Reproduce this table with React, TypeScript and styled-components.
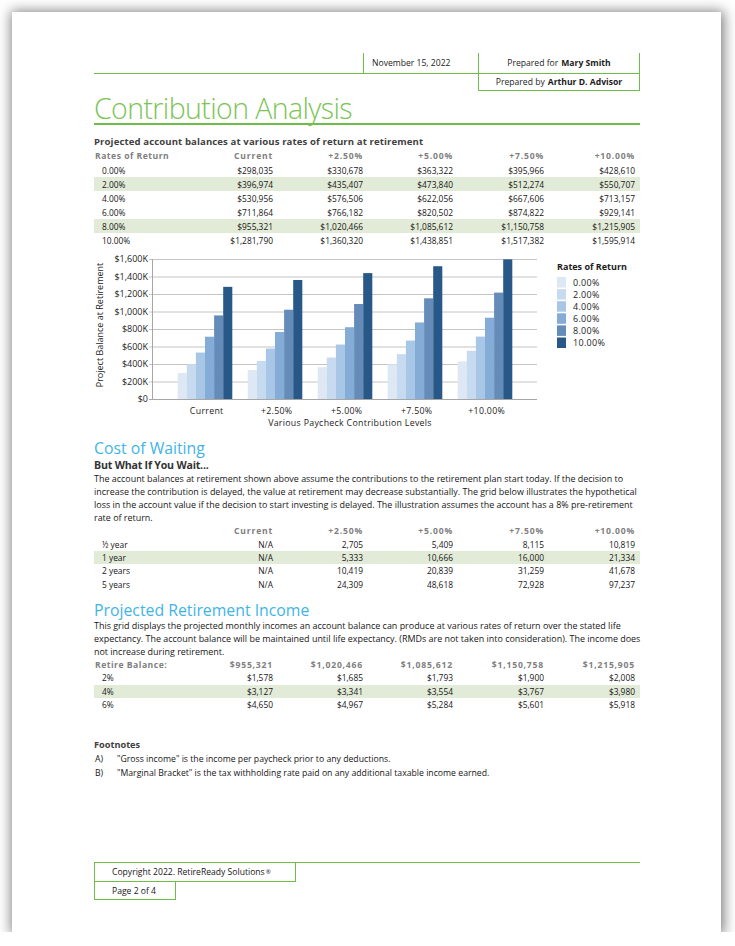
import React from "react";
import styled, { createGlobalStyle, css } from "styled-components";

const GREEN = "#6dbd48";
const FONT = `"Open Sans", "Noto Sans", sans-serif`;
const COLS = "89px 90px 90px 90px 91px 91px";

const GlobalStyle = createGlobalStyle`
  html, body { margin: 0; padding: 0; background: #ffffff; }
  body { font-family: ${FONT}; color: #1c1c1c; }
`;

const Page = styled.div`
  box-sizing: border-box;
  margin: 12px 0 0 12px;
  width: 709px;
  height: 920px;
  background: #fff;
  box-shadow: 1px 1px 12px 2px rgba(0, 0, 0, 0.5);
  padding: 41px 81px 32px 82px;
  display: flex;
  flex-direction: column;
`;

const HeaderRow = styled.div<{ $h: number }>`
  display: flex;
  justify-content: flex-end;
  height: ${(p) => p.$h}px;
`;

const HeaderFill = styled.div`
  flex: 1;
  border-bottom: 1px solid ${GREEN};
`;

const HeaderCell = styled.div<{ $w: number; $right?: boolean; $center?: boolean }>`
  box-sizing: border-box;
  width: ${(p) => p.$w}px;
  border-left: 1px solid ${GREEN};
  border-bottom: 1px solid ${GREEN};
  ${(p) => p.$right && css`border-right: 1px solid ${GREEN};`}
  display: flex;
  align-items: center;
  justify-content: ${(p) => (p.$center ? "center" : "flex-start")};
  padding-left: ${(p) => (p.$center ? 0 : 8)}px;
  font-size: 8.6px;
  color: #1c1c1c;
  b { font-weight: 700; margin-left: 3px; }
`;

const Title = styled.h1`
  margin: 2px 0 0;
  height: 30px;
  font-weight: 300;
  font-size: 28.5px;
  line-height: 30px;
  letter-spacing: -0.6px;
  color: #7cc456;
  border-bottom: 2px solid ${GREEN};
`;

const SectionLabel = styled.div`
  margin-top: 10px;
  height: 14px;
  line-height: 14px;
  font-size: 9.6px;
  font-weight: 700;
  color: #3f3f3f;
  letter-spacing: 0.1px;
`;

const Row = styled.div<{ $band?: boolean; $h: number }>`
  display: grid;
  grid-template-columns: ${COLS};
  padding-right: 5px;
  height: ${(p) => p.$h}px;
  align-items: center;
  background: ${(p) => (p.$band ? "#e2ebd8" : "transparent")};
  font-size: 8.4px;
  color: #161616;
`;

const Label = styled.div<{ $head?: boolean }>`
  padding-left: ${(p) => (p.$head ? 1 : 8)}px;
  white-space: nowrap;
`;

const Num = styled.div`
  text-align: right;
  white-space: nowrap;
`;

const HeadText = styled.div<{ $num?: boolean }>`
  text-align: ${(p) => (p.$num ? "right" : "left")};
  padding-left: ${(p) => (p.$num ? 0 : 1)}px;
  white-space: nowrap;
  font-weight: 700;
  color: #808080;
  font-size: 8.6px;
  letter-spacing: ${(p) => (p.$num ? 0.8 : 0.5)}px;
`;

const ChartBox = styled.div`
  margin-top: 5px;
  height: 178px;
`;

const SectionHeading = styled.h2<{ $mt: number }>`
  margin: ${(p) => p.$mt}px 0 0;
  font-weight: 400;
  font-size: 15.8px;
  line-height: 18px;
  height: 18px;
  color: #3fb5e6;
`;

const SubHeading = styled.div`
  margin-top: 1px;
  height: 14px;
  font-size: 10.6px;
  line-height: 14px;
  font-weight: 700;
  letter-spacing: -0.2px;
  color: #333333;
`;

const Paragraph = styled.p`
  margin: 0;
  font-size: 8.95px;
  line-height: 13px;
  color: #161616;
  white-space: nowrap;
`;

const FootTitle = styled.div`
  margin-top: 27px;
  height: 14px;
  line-height: 14px;
  font-size: 9.2px;
  font-weight: 700;
  color: #404040;
`;

const NoteRow = styled.div`
  display: grid;
  grid-template-columns: 22px 1fr;
  padding-left: 1px;
  font-size: 8.7px;
  line-height: 14px;
  color: #161616;
`;

const Footer = styled.div`
  margin-top: auto;
  border-top: 1px solid ${GREEN};
  display: flex;
  flex-direction: column;
`;

const FooterCell = styled.div<{ $w: number; $h: number }>`
  box-sizing: border-box;
  width: ${(p) => p.$w}px;
  height: ${(p) => p.$h}px;
  border-left: 1px solid ${GREEN};
  border-right: 1px solid ${GREEN};
  border-bottom: 1px solid ${GREEN};
  padding-left: 17px;
  display: flex;
  align-items: center;
  font-size: 8.6px;
  color: #161616;
  sup { font-size: 6px; margin-left: 1px; }
`;

const ChartText = styled.text<{ $bold?: boolean; $ls?: number; $size?: number }>`
  font-family: ${FONT};
  font-size: ${(p) => p.$size ?? 9}px;
  fill: #1c1c1c;
  font-weight: ${(p) => (p.$bold ? 700 : 400)};
  letter-spacing: ${(p) => p.$ls ?? 0}px;
`;

const cols = ["Current", "+2.50%", "+5.00%", "+7.50%", "+10.00%"];
const rates = ["0.00%", "2.00%", "4.00%", "6.00%", "8.00%", "10.00%"];
const balances = [
  [298035, 330678, 363322, 395966, 428610],
  [396974, 435407, 473840, 512274, 550707],
  [530956, 576506, 622056, 667606, 713157],
  [711864, 766182, 820502, 874822, 929141],
  [955321, 1020466, 1085612, 1150758, 1215905],
  [1281790, 1360320, 1438851, 1517382, 1595914],
];
const barColors = ["#dde8f4", "#c6daf0", "#a8c6e6", "#85acd6", "#658cb9", "#275888"];
const fmt = (n: number) => "$" + n.toLocaleString("en-US");

const waiting = [
  ["½ year", "N/A", "2,705", "5,409", "8,115", "10,819"],
  ["1 year", "N/A", "5,333", "10,666", "16,000", "21,334"],
  ["2 years", "N/A", "10,419", "20,839", "31,259", "41,678"],
  ["5 years", "N/A", "24,309", "48,618", "72,928", "97,237"],
];

const incomeHead = ["$955,321", "$1,020,466", "$1,085,612", "$1,150,758", "$1,215,905"];
const income = [
  ["2%", "$1,578", "$1,685", "$1,793", "$1,900", "$2,008"],
  ["4%", "$3,127", "$3,341", "$3,554", "$3,767", "$3,980"],
  ["6%", "$4,650", "$4,967", "$5,284", "$5,601", "$5,918"],
];

const Chart: React.FC = () => {
  const left = 58;
  const right = 443;
  const top = 7;
  const bottom = 147;
  const step = (bottom - top) / 8;
  const yLabels = ["$1,600K", "$1,400K", "$1,200K", "$1,000K", "$800K", "$600K", "$400K", "$200K", "$0"];
  return (
    <svg width="546" height="178" viewBox="0 0 546 178">
      {yLabels.map((l, i) => {
        const y = top + i * step;
        return (
          <g key={l}>
            <line x1={left - 3} x2={right} y1={y + 0.5} y2={y + 0.5} stroke={i === 8 ? "#a6a6a6" : "#c4c4c4"} strokeWidth="1" />
            <ChartText x={left - 4} y={y + 3.2} textAnchor="end">
              {l}
            </ChartText>
          </g>
        );
      })}
      <line x1={left + 0.5} x2={left + 0.5} y1={top} y2={bottom} stroke="#a6a6a6" strokeWidth="1" />
      {cols.map((c, g) => {
        const gx = 83.7 + g * 70;
        return (
          <g key={c}>
            {balances.map((row, r) => {
              const h = (row[g] / 1000) * 0.0875;
              return <rect key={r} x={gx + r * 9.1} y={bottom - h} width={9.1} height={h} fill={barColors[r]} />;
            })}
            <ChartText x={gx + 29} y={161.5} textAnchor="middle" $ls={0.3} $size={8.8}>
              {c}
            </ChartText>
          </g>
        );
      })}
      <ChartText x={256} y={173.5} textAnchor="middle" $ls={0.3} $size={8.8}>
        Various Paycheck Contribution Levels
      </ChartText>
      <ChartText transform="translate(9,73) rotate(-90)" textAnchor="middle">
        Project Balance at Retirement
      </ChartText>
      <ChartText x={463} y={18} $bold>
        Rates of Return
      </ChartText>
      {rates.map((r, i) => (
        <g key={r}>
          <rect x={463} y={25 + i * 12.1} width={9} height={10.5} fill={barColors[i]} />
          <ChartText x={479} y={33.5 + i * 12.1} $ls={0.3}>
            {r}
          </ChartText>
        </g>
      ))}
    </svg>
  );
};

export default function App() {
  return (
    <>
      <GlobalStyle />
      <Page>
        <HeaderRow $h={21}>
          <HeaderFill />
          <HeaderCell $w={115}>November 15, 2022</HeaderCell>
          <HeaderCell $w={162} $right $center>
            Prepared for <b>Mary Smith</b>
          </HeaderCell>
        </HeaderRow>
        <HeaderRow $h={17}>
          <HeaderCell $w={162} $right $center>
            Prepared by <b>Arthur D. Advisor</b>
          </HeaderCell>
        </HeaderRow>

        <Title>Contribution Analysis</Title>

        <SectionLabel>Projected account balances at various rates of return at retirement</SectionLabel>
        <Row $h={14}>
          <HeadText>Rates of Return</HeadText>
          {cols.map((c) => (
            <HeadText key={c} $num>
              {c}
            </HeadText>
          ))}
        </Row>
        {balances.map((row, i) => (
          <Row key={rates[i]} $h={14} $band={i === 1 || i === 4}>
            <Label>{rates[i]}</Label>
            {row.map((v, j) => (
              <Num key={j}>{fmt(v)}</Num>
            ))}
          </Row>
        ))}

        <ChartBox>
          <Chart />
        </ChartBox>

        <SectionHeading $mt={9}>Cost of Waiting</SectionHeading>
        <SubHeading>But What If You Wait...</SubHeading>
        <Paragraph>
          The account balances at retirement shown above assume the contributions to the retirement plan start today. If the decision to
          <br />
          increase the contribution is delayed, the value at retirement may decrease substantially. The grid below illustrates the hypothetical
          <br />
          loss in the account value if the decision to start investing is delayed. The illustration assumes the account has a 8% pre-retirement
          <br />
          rate of return.
        </Paragraph>
        <Row $h={13.4}>
          <div />
          {cols.map((c) => (
            <HeadText key={c} $num>
              {c}
            </HeadText>
          ))}
        </Row>
        {waiting.map((row, i) => (
          <Row key={row[0]} $h={13.4} $band={i === 1}>
            <Label>{row[0]}</Label>
            {row.slice(1).map((v, j) => (
              <Num key={j}>{v}</Num>
            ))}
          </Row>
        ))}

        <SectionHeading $mt={10}>Projected Retirement Income</SectionHeading>
        <Paragraph>
          This grid displays the projected monthly incomes an account balance can produce at various rates of return over the stated life
          <br />
          expectancy. The account balance will be maintained until life expectancy. (RMDs are not taken into consideration). The income does
          <br />
          not increase during retirement.
        </Paragraph>
        <Row $h={13.3}>
          <HeadText>Retire Balance:</HeadText>
          {incomeHead.map((c) => (
            <HeadText key={c} $num>
              {c}
            </HeadText>
          ))}
        </Row>
        {income.map((row, i) => (
          <Row key={row[0]} $h={13.3} $band={i === 1}>
            <Label>{row[0]}</Label>
            {row.slice(1).map((v, j) => (
              <Num key={j}>{v}</Num>
            ))}
          </Row>
        ))}

        <FootTitle>Footnotes</FootTitle>
        <NoteRow>
          <span>A)</span>
          <span>"Gross income" is the income per paycheck prior to any deductions.</span>
        </NoteRow>
        <NoteRow>
          <span>B)</span>
          <span>"Marginal Bracket" is the tax withholding rate paid on any additional taxable income earned.</span>
        </NoteRow>

        <Footer>
          <FooterCell $w={202} $h={19}>
            Copyright 2022. RetireReady Solutions<sup>®</sup>
          </FooterCell>
          <FooterCell $w={82} $h={18}>
            Page 2 of 4
          </FooterCell>
        </Footer>
      </Page>
    </>
  );
}
